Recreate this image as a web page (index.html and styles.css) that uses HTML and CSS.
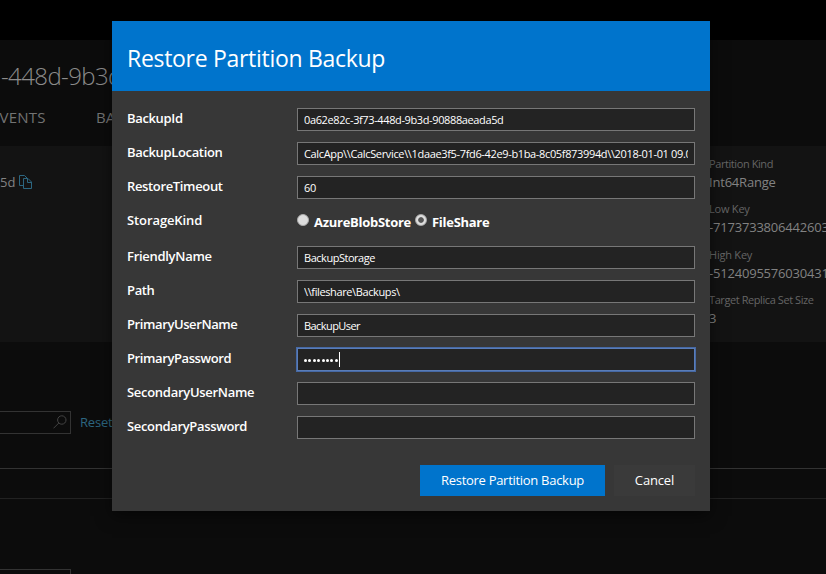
FILE: index.html
```html
<!DOCTYPE html>
<html lang="en">
<head>
<meta charset="utf-8">
<title>Restore Partition Backup</title>
<link rel="stylesheet" href="styles.css">
</head>
<body>
<div class="page">
  <div class="topbar"></div>
  <header class="heading">
    <div class="partition-title">-448d-9b3d</div>
    <nav class="tabs"><span class="tab-events">EVENTS</span><span class="tab-backups">BA</span></nav>
  </header>
  <section class="essentials">
    <div class="partition-id"><span>5d</span>
      <svg class="copy-icon" width="13" height="14" viewBox="0 0 13 14"><path d="M4.500 10.500h-4v-10h5l2.500 2.500M4.500 3.500h4.500l3.500 3.500v6.500h-8zM8.500 3.500v4h4"/></svg>
    </div>
    <dl class="facts">
      <dt class="kind">Partition Kind</dt><dd class="range">Int64Range</dd>
      <dt>Low Key</dt><dd>-7173733806442603</dd>
      <dt>High Key</dt><dd>-5124095576030431</dd>
      <dt class="target">Target Replica Set Size</dt><dd>3</dd>
    </dl>
  </section>
  <section class="results">
    <div class="filter">
      <div class="search"><svg width="14" height="14" viewBox="0 0 14 14"><circle cx="8.800" cy="5" r="4.200"/><path d="M5.800 8L.5 13.300"/></svg></div>
      <span class="reset">Reset</span>
    </div>
    <div class="table-row"></div>
    <div class="search second"></div>
  </section>
</div>
<div class="overlay">
  <main class="dialog">
    <h1 class="dialog-head"><span class="dialog-title">Restore Partition Backup</span></h1>
    <div class="form">
      <div class="row"><span class="label l-id">BackupId</span><div class="field"><span class="v-id">0a62e82c-3f73-448d-9b3d-90888aeada5d</span></div></div>
      <div class="row"><span class="label l-loc">BackupLocation</span><div class="field"><span class="v-loc">CalcApp\\CalcService\\1daae3f5-7fd6-42e9-b1ba-8c05f873994d\\2018-01-01 09.00</span></div></div>
      <div class="row"><span class="label l-time">RestoreTimeout</span><div class="field"><span>60</span></div></div>
      <div class="row storage"><span class="label l-kind">StorageKind</span><div class="choices"><i class="radio"></i><b class="blob">AzureBlobStore</b><i class="radio checked"></i><b class="share">FileShare</b></div></div>
      <div class="row"><span class="label l-name">FriendlyName</span><div class="field"><span class="v-store">BackupStorage</span></div></div>
      <div class="row"><span class="label l-path">Path</span><div class="field"><span class="v-path">\\fileshare\Backups\</span></div></div>
      <div class="row"><span class="label l-pu">PrimaryUserName</span><div class="field"><span class="v-user">BackupUser</span></div></div>
      <div class="row"><span class="label l-pp">PrimaryPassword</span><div class="field focused"><div class="dots"><i></i><i></i><i></i><i></i><i></i><i></i><i></i><i></i></div><i class="caret"></i></div></div>
      <div class="row"><span class="label l-su">SecondaryUserName</span><div class="field"></div></div>
      <div class="row"><span class="label l-sp">SecondaryPassword</span><div class="field"></div></div>
    </div>
    <div class="actions"><button class="primary">Restore Partition Backup</button><button class="cancel">Cancel</button></div>
  </main>
</div>
</body>
</html>
```
FILE: styles.css
```css
* { box-sizing: border-box; }
body { margin: 0; width: 826px; height: 574px; overflow: hidden; background: #0c0c0c; font-family: "Open Sans", "Noto Sans", sans-serif; font-size: 13px; color: #828282; }
span, b, dt, dd, .partition-title { white-space: nowrap; }
svg { fill: none; stroke-width: 1; }

.page { height: 574px; overflow: hidden; }
.topbar { height: 40px; background: #000; }
.heading { height: 106px; padding-top: 19px; }
.partition-title { width: 112px; overflow: hidden; padding-left: 1px; font-size: 24px; line-height: 34px; font-weight: 300; letter-spacing: -.6px; color: #8c8c8c; }
.tabs { display: flex; margin: 13px 0 0 -9px; font-size: 15px; line-height: 22px; color: #737373; }
.tab-events { width: 105px; letter-spacing: .2px; }
.essentials { display: flex; justify-content: space-between; height: 196px; background: #131313; }
.partition-id { display: flex; gap: 4px; padding-top: 26px; line-height: 20px; }
.copy-icon { margin-top: 3px; stroke: #2c6680; }
.facts { width: 117px; margin: 0; padding-top: 9px; overflow: hidden; }
dt { height: 18px; font-size: 11px; line-height: 18px; letter-spacing: -.22px; color: #656565; }
.kind, .target { letter-spacing: -.42px; }
dd { height: 27.300px; margin: 0; line-height: 19px; letter-spacing: -.2px; }
.results { padding-top: 69px; }
.filter { display: flex; gap: 9px; height: 23px; }
.search { display: flex; justify-content: flex-end; width: 71px; height: 23px; padding: 3px 3px 0 0; border: 1px solid #333; border-left: 0; }
.search svg { stroke: #444; }
.reset { color: #2c6680; line-height: 22px; letter-spacing: -.2px; }
.table-row { height: 31px; margin-top: 34px; border-top: 1px solid #333; border-bottom: 1px solid #222; }
.second { margin-top: 70px; }

.overlay { position: absolute; top: 21px; left: 112px; }
.dialog { width: 598px; height: 490px; background: #373737; box-shadow: 0 5px 15px rgba(0,0,0,.5); color: #fff; }
.dialog-head { height: 70px; margin: 0; padding: 20px 15px 0; background: #0074cc; font-size: 23px; line-height: 34px; font-weight: 400; letter-spacing: -.3px; }
.form { padding: 17px 15px 0; }
.row { display: flex; height: 34px; }
.storage { height: 36px; }
.label { width: 170px; font-size: 13px; font-weight: 600; line-height: 21px; letter-spacing: -.35px; }
.l-kind { letter-spacing: -.1px; }
.l-name, .l-su { letter-spacing: -.29px; }
.l-pu, .l-pp { letter-spacing: -.4px; }
.field { display: flex; width: 398px; height: 23px; padding: 0 6px; overflow: hidden; border: 1px solid #777; background: #232323; font-size: 11px; line-height: 22px; letter-spacing: -.38px; }
.field > span { flex: 1; overflow: hidden; }
.v-loc { letter-spacing: -.345px; }
.v-store { letter-spacing: -.47px; }
.v-user { letter-spacing: -.57px; }
.focused { border-color: #5a7db8; box-shadow: 0 0 0 1px #4669a5; }
.dots { display: flex; gap: 1.400px; padding-top: 10px; }
.dots i { width: 3px; height: 3px; border-radius: 50%; background: #fff; }
.caret { width: 1px; height: 15px; margin: 3px 0 0 1px; background: #fff; }
.choices { display: flex; font-size: 13px; line-height: 24px; letter-spacing: -.28px; }
.radio { width: 12px; height: 12px; margin-top: 4px; border-radius: 50%; background: #ddd; border: 1px solid #aaa; }
.radio.checked { margin-left: 3px; background: radial-gradient(#555 0 2.400px, #ddd 3.200px); }
.choices b { margin-left: 5px; }
.blob { width: 98px; }
.actions { display: flex; justify-content: flex-end; gap: 9px; padding: 15px 15px 0; }
button { height: 31px; padding: 0; border: 0; color: #fff; font: 13px/31px "Open Sans", sans-serif; letter-spacing: -.29px; white-space: nowrap; }
.primary { width: 185px; background: #0074cc; }
.cancel { width: 81px; background: #3a3a3a; letter-spacing: -.15px; }
```
